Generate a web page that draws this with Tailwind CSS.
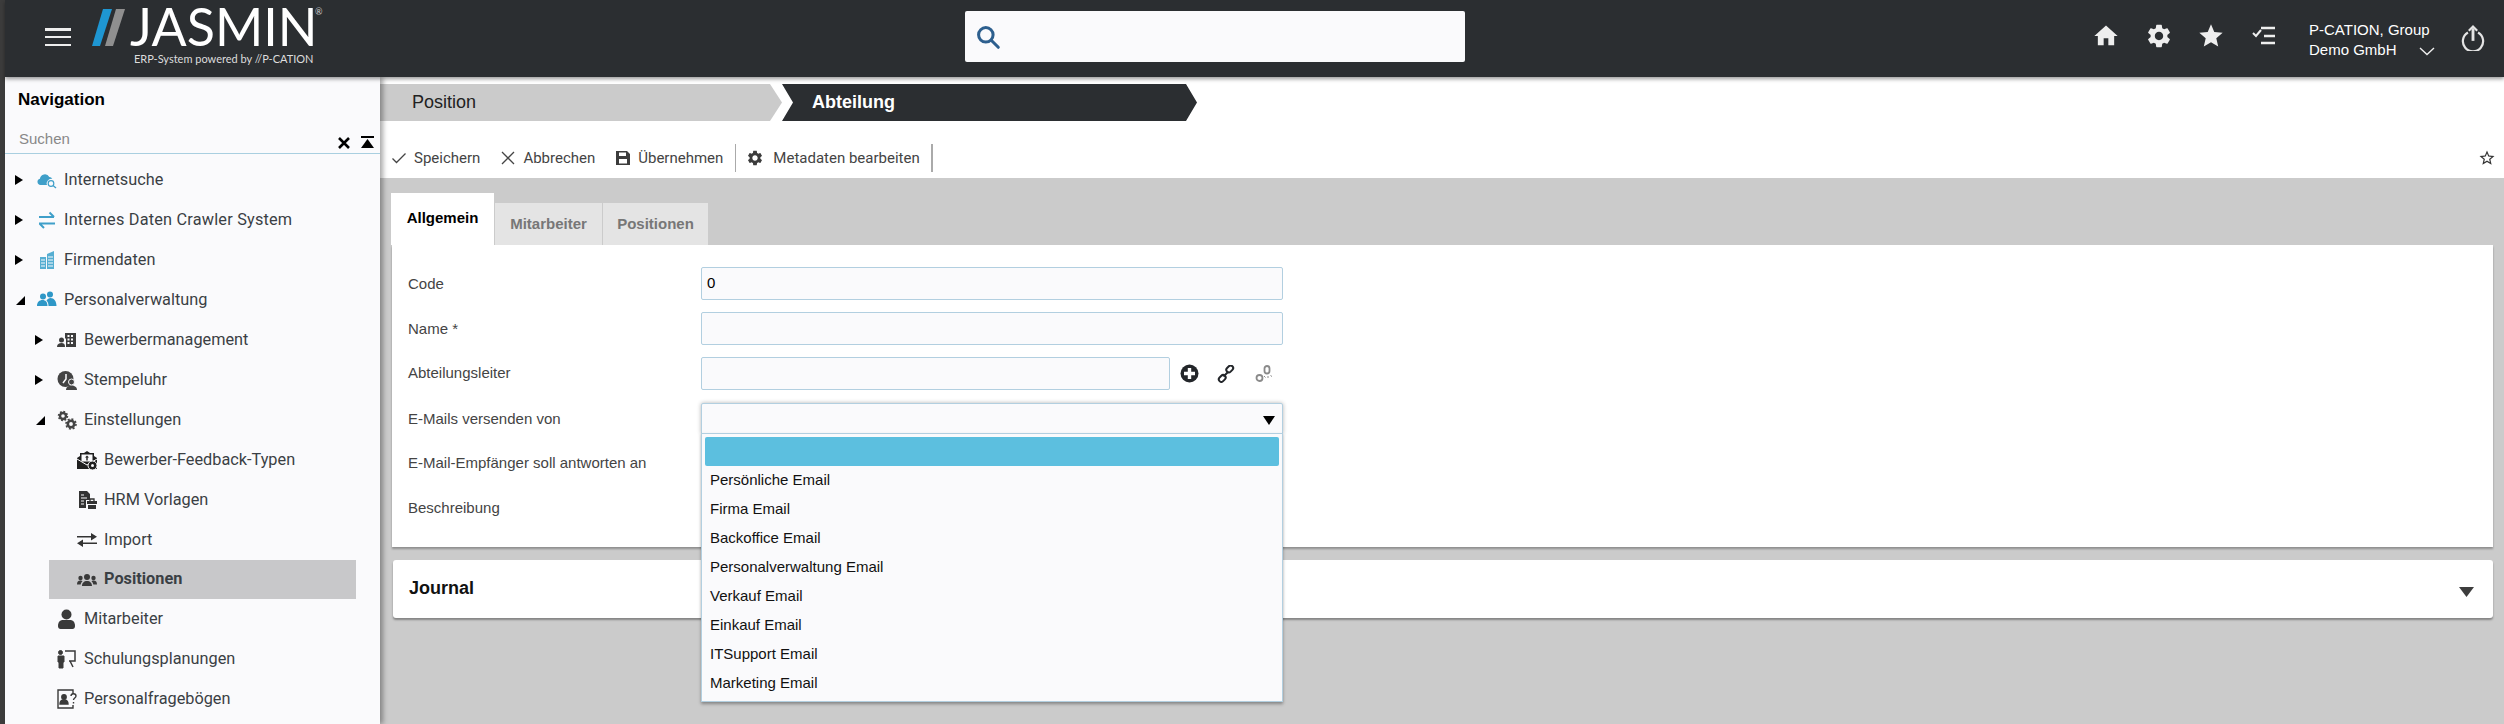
<!DOCTYPE html>
<html lang="de">
<head>
<meta charset="utf-8">
<script src="https://cdn.jsdelivr.net/npm/@tailwindcss/browser@4"></script>
<title>JASMIN</title>
</head>
<body class="m-0 h-[724px] w-[2504px] overflow-hidden bg-[#3c3c3c] font-['Liberation_Sans',sans-serif]">
<div class="flex h-[724px] w-[2504px]">
  <div class="w-[5px] shrink-0 bg-[#3c3c3c]"></div>
  <div class="flex h-[724px] w-[2499px] flex-col">
    <!-- Header -->
    <header class="relative z-20 flex h-[77px] shrink-0 items-start bg-[#2b2e31] shadow-[0_2px_4px_rgba(0,0,0,0.4)]">
      <button class="ml-[40px] mt-[27px] flex h-[20px] w-[26px] flex-col justify-between py-[1px]">
        <span class="block h-[2.5px] w-[26px] bg-[#eeeeee]"></span>
        <span class="block h-[2.5px] w-[26px] bg-[#eeeeee]"></span>
        <span class="block h-[2.5px] w-[26px] bg-[#eeeeee]"></span>
      </button>
      <svg class="ml-[21px] mt-[9px] shrink-0" width="33" height="37" viewBox="0 0 33 37"><polygon points="0,37 8,37 20,0 11,0" fill="#1e96d2"/><polygon points="13,37 21,37 33,0 24,0" fill="#8f8f8f"/></svg>
      <div class="ml-[5px] flex w-[200px] flex-col">
        <div class="relative h-[52px] font-['Lato',sans-serif] text-[52px] font-normal leading-[52px] tracking-[0px] text-white">JASMIN<span class="absolute left-[185px] top-[7px] text-[9px] leading-[10px] tracking-normal text-[#cccccc]">®</span></div>
        <div class="ml-[4px] whitespace-nowrap font-['Lato',sans-serif] text-[11px] leading-[14px] text-[#dddddd]">ERP-System powered by //P-CATION</div>
      </div>
      <div class="ml-[635px] mt-[11px] flex h-[51px] w-[500px] shrink-0 items-center rounded-[2px] bg-[#fafafc] pl-[10px]">
        <svg width="26" height="26" viewBox="0 0 24 24" fill="none" stroke="#2d5f8e" stroke-width="2.8"><circle cx="10" cy="10" r="6.7"/><path d="M15 15l6.5 6.5" stroke-linecap="round"/></svg>
      </div>
      <svg class="ml-[627px] mt-[22px] shrink-0" width="28" height="28" viewBox="0 0 24 24" fill="#eeeeee"><path d="M10 20v-6h4v6h5v-8h3L12 3 2 12h3v8z"/></svg>
      <svg class="ml-[25px] mt-[22px] shrink-0" width="28" height="28" viewBox="0 0 24 24" fill="#eeeeee"><path d="M19.14 12.94c.04-.3.06-.61.06-.94 0-.32-.02-.64-.07-.94l2.03-1.58c.18-.14.23-.41.12-.61l-1.92-3.32c-.12-.22-.37-.29-.59-.22l-2.39.96c-.5-.38-1.03-.7-1.62-.94l-.36-2.54c-.04-.24-.24-.41-.48-.41h-3.84c-.24 0-.43.17-.47.41l-.36 2.54c-.59.24-1.13.57-1.62.94l-2.39-.96c-.22-.08-.47 0-.59.22L2.74 8.87c-.12.21-.08.47.12.61l2.03 1.58c-.05.3-.09.63-.09.94s.02.64.07.94l-2.03 1.58c-.18.14-.23.41-.12.61l1.92 3.32c.12.22.37.29.59.22l2.39-.96c.5.38 1.03.7 1.62.94l.36 2.54c.05.24.24.41.48.41h3.84c.24 0 .44-.17.47-.41l.36-2.54c.59-.24 1.13-.56 1.62-.94l2.39.96c.22.08.47 0 .59-.22l1.92-3.32c.12-.22.07-.47-.12-.61l-2.01-1.58zM12 15.6c-1.98 0-3.6-1.62-3.6-3.6s1.62-3.6 3.6-3.6 3.6 1.62 3.6 3.6-1.62 3.6-3.6 3.6z"/></svg>
      <svg class="ml-[24px] mt-[22px] shrink-0" width="28" height="28" viewBox="0 0 24 24" fill="#eeeeee"><path d="M12 17.27 18.18 21l-1.64-7.03L22 9.24l-7.19-.61L12 2 9.19 8.63 2 9.24l5.46 4.73L5.82 21z"/></svg>
      <svg class="ml-[25px] mt-[23px] shrink-0" width="28" height="28" viewBox="0 0 28 28" fill="none" stroke="#eeeeee" stroke-width="2.4"><path d="M3 10l3 3 5-6" stroke-width="2"/><path d="M11 5h14M14 13h11M11 20h14"/></svg>
      <div class="ml-[31px] mt-[20px] w-[126px] text-[15px] leading-[20px] text-white">
        <div class="whitespace-nowrap">P-CATION, Group</div>
        <div class="flex items-center whitespace-nowrap">Demo GmbH<svg class="ml-[22px] mt-[3px]" width="16" height="9" viewBox="0 0 16 9" fill="none" stroke="#eeeeee" stroke-width="1.4"><path d="M1 1l7 6.5L15 1"/></svg></div>
      </div>
      <svg class="ml-[26px] mt-[24px] shrink-0" width="24" height="27" viewBox="0 0 28 32" fill="none" stroke="#e4e4e4" stroke-width="2.6"><path d="M8 10a12 12 0 1 0 12 0"/><path d="M14 20V5" stroke-width="3.4"/><path d="M9 8l5-5 5 5" stroke-width="2.6"/></svg>
    </header>

    <div class="flex h-[647px] w-[2499px]">
      <!-- Sidebar -->
      <aside class="relative z-10 h-[647px] w-[375px] shrink-0 overflow-hidden bg-[#fafafc] text-[16.3px] text-[#3a3f44] shadow-[3px_0_5px_rgba(0,0,0,0.35)] font-['Roboto',sans-serif]">
        <div class="pl-[13px] pt-[13px] text-[17px] font-bold leading-[20px] text-black font-['Liberation_Sans',sans-serif]">Navigation</div>
        <div class="mt-[15px] flex h-[29px] items-center border-b border-[#a9cfe0] pl-[14px] pr-[6px]">
          <span class="flex-1 text-[15px] text-[#888888] font-['Liberation_Sans',sans-serif]">Suchen</span>
          <svg class="mr-[10px] mt-[8px]" width="14" height="14" viewBox="0 0 14 14" stroke="#000" stroke-width="2.6"><path d="M2 2l10 10M12 2L2 12"/></svg>
          <svg class="mt-[6px]" width="13" height="13" viewBox="0 0 13 13" fill="#000"><rect x="0" y="0" width="13" height="2"/><polygon points="6.5,3 13,12 0,12"/></svg>
        </div>
        <nav class="mt-[6px]">
          <div class="flex h-10 items-center pl-[10px]">
            <span class="w-[22px]"><svg width="8" height="10" viewBox="0 0 8 10"><polygon points="0,0 8,5 0,10" fill="#000"/></svg></span>
            <svg class="mr-[7px]" width="20" height="20" viewBox="0 0 20 20" fill="#3f9fc9"><path d="M3.5 15a3.2 3.2 0 0 1-.6-6.3A5 5 0 0 1 12.3 7a3.5 3.5 0 0 1 3 2A4.5 4.5 0 0 0 10 15z"/><circle cx="14" cy="13.5" r="2.8" fill="none" stroke="#3f9fc9" stroke-width="1.2"/><path d="M16 15.5l3 2.5" stroke="#3f9fc9" stroke-width="1.3"/></svg>
            <span>Internetsuche</span>
          </div>
          <div class="flex h-10 items-center pl-[10px]">
            <span class="w-[22px]"><svg width="8" height="10" viewBox="0 0 8 10"><polygon points="0,0 8,5 0,10" fill="#000"/></svg></span>
            <svg class="mr-[7px]" width="20" height="20" viewBox="0 0 20 20" fill="none" stroke="#3f9fc9" stroke-width="2"><path d="M2 7h15M12.5 2.5L17 7M2 13.5h16M2.5 13.5L7 18"/></svg>
            <span class="tracking-[0.2px]">Internes Daten Crawler System</span>
          </div>
          <div class="flex h-10 items-center pl-[10px]">
            <span class="w-[22px]"><svg width="8" height="10" viewBox="0 0 8 10"><polygon points="0,0 8,5 0,10" fill="#000"/></svg></span>
            <svg class="mr-[7px]" width="20" height="20" viewBox="0 0 20 20" fill="#56aed2"><rect x="3" y="7" width="6" height="12"/><polygon points="10,4 17,1 17,19 10,19"/><path d="M4 10h4M4 13h4M4 16h4M11 7h5M11 10h5M11 13h5M11 16h5" stroke="#fafafc" stroke-width="1"/></svg>
            <span>Firmendaten</span>
          </div>
          <div class="flex h-10 items-center pl-[10px]">
            <span class="w-[22px]"><svg class="ml-[1px]" width="9" height="9" viewBox="0 0 9 9"><polygon points="9,0 9,9 0,9" fill="#000"/></svg></span>
            <svg class="mr-[7px]" width="20" height="20" viewBox="0 0 20 20" fill="#2e97c7"><circle cx="6" cy="6.5" r="3"/><circle cx="13" cy="4.5" r="3"/><path d="M0 16c0-4 2.500-6 5.500-6s5 2 5 6zM11.500 16c0-2-.5-4-2-5.500 1-1.500 2.500-2.500 4-2.500 3.500 0 6 3 6 8z"/></svg>
            <span>Personalverwaltung</span>
          </div>
          <div class="flex h-10 items-center pl-[30px]">
            <span class="w-[22px]"><svg width="8" height="10" viewBox="0 0 8 10"><polygon points="0,0 8,5 0,10" fill="#000"/></svg></span>
            <svg class="mr-[7px]" width="20" height="20" viewBox="0 0 20 20" fill="#3d3d3d"><circle cx="4.500" cy="10" r="2.500"/><path d="M0 17c0-3 2-4 4.500-4s3.500 1 3.500 4z"/><path d="M8 3h11v14H9V8.500H8zM10.500 5v2h2V5zm3.500 0v2h2V5zm-3.500 3.500v2h2v-2zm3.500 0v2h2v-2zM10.500 12v2h2v-2zm3.500 0v2h2v-2z" fill-rule="evenodd"/></svg>
            <span>Bewerbermanagement</span>
          </div>
          <div class="flex h-10 items-center pl-[30px]">
            <span class="w-[22px]"><svg width="8" height="10" viewBox="0 0 8 10"><polygon points="0,0 8,5 0,10" fill="#000"/></svg></span>
            <svg class="mr-[7px]" width="20" height="20" viewBox="0 0 20 20" fill="#444"><circle cx="8.500" cy="9" r="8"/><path d="M9 4v5l-3 4" stroke="#fafafc" stroke-width="1.500" fill="none"/><circle cx="14.500" cy="12" r="3" stroke="#fafafc" stroke-width="1"/><path d="M9 20c0-3 2.500-4.500 5.500-4.500S20 17 20 20z"/></svg>
            <span>Stempeluhr</span>
          </div>
          <div class="flex h-10 items-center pl-[30px]">
            <span class="w-[22px]"><svg class="ml-[1px]" width="9" height="9" viewBox="0 0 9 9"><polygon points="9,0 9,9 0,9" fill="#000"/></svg></span>
            <svg class="mr-[7px]" width="20" height="20" viewBox="0 0 20 20" fill="none" stroke="#444"><circle cx="6" cy="6" r="3" stroke-width="2.400"/><circle cx="6" cy="6" r="4.500" stroke-width="1.500" stroke-dasharray="1.800 1.700"/><circle cx="14" cy="14" r="3.200" stroke-width="2.600"/><circle cx="14" cy="14" r="5" stroke-width="1.600" stroke-dasharray="2 1.900"/></svg>
            <span>Einstellungen</span>
          </div>
          <div class="flex h-10 items-center pl-[50px]">
            <span class="w-[22px]"></span>
            <svg class="mr-[7px]" width="20" height="20" viewBox="0 0 20 20" fill="#1f1f1f"><path d="M0 8l3-2V3h4l3-2 3 2h4v3l3 2v11H0z"/><rect x="4.500" y="4.500" width="11" height="7" fill="#fafafc"/><path d="M10 5.500l2 2h-1.300v3h-1.400v-3H8z"/><path d="M0 9l10 6 10-6" stroke="#fafafc" fill="none"/><circle cx="15.500" cy="15.500" r="4.500" stroke="#fafafc"/><circle cx="15.500" cy="15.500" r="1.500" fill="#fafafc"/></svg>
            <span>Bewerber-Feedback-Typen</span>
          </div>
          <div class="flex h-10 items-center pl-[50px]">
            <span class="w-[22px]"></span>
            <svg class="mr-[7px]" width="20" height="20" viewBox="0 0 20 20" fill="#333"><path d="M2 1h8l3 3v6H9v8H2z"/><path d="M4 5h3M4 8h6M4 11h3M4 14h3" stroke="#fafafc" stroke-width="1.200"/><path d="M10 11h10v3H10zM11 15h8v4h-8z"/><path d="M13 11V9h4v2" fill="none" stroke="#333" stroke-width="1.300"/></svg>
            <span>HRM Vorlagen</span>
          </div>
          <div class="flex h-10 items-center pl-[50px]">
            <span class="w-[22px]"></span>
            <svg class="mr-[7px]" width="20" height="20" viewBox="0 0 20 20" fill="#333"><path d="M0 6h14v1.600H0zM14 3l6 3.800-6 3.800zM20 12.500H6v1.600h14zM6 9.500l-6 3.800 6 3.800z"/></svg>
            <span>Import</span>
          </div>
          <div class="ml-[44px] mr-[24px] flex h-[39px] items-center bg-[#c8c8ca] pl-[6px] font-bold">
            <span class="w-[22px]"></span>
            <svg class="mr-[7px]" width="20" height="20" viewBox="0 0 20 20" fill="#3a3a3a"><circle cx="10" cy="7" r="3"/><circle cx="3.500" cy="8" r="2.200"/><circle cx="16.500" cy="8" r="2.200"/><path d="M5 16c0-3 2-5 5-5s5 2 5 5zM0 14.500c0-2.500 1-4 3.500-4 1 0 1.500.3 2 .7-1 1-1.700 2-1.800 3.300zM20 14.500c0-2.500-1-4-3.500-4-1 0-1.500.3-2 .7 1 1 1.700 2 1.800 3.300z"/></svg>
            <span>Positionen</span>
          </div>
          <div class="flex h-10 items-center pl-[30px]">
            <span class="w-[22px]"></span>
            <svg class="mr-[7px]" width="20" height="20" viewBox="0 0 20 20" fill="#3a3a3a"><circle cx="9.500" cy="5.500" r="5"/><path d="M1 17c0-4 2-6 5-6h7c3 0 5 2 5 6 0 2-1 3-2.500 3h-12C2 20 1 19 1 17z"/></svg>
            <span>Mitarbeiter</span>
          </div>
          <div class="flex h-10 items-center pl-[30px]">
            <span class="w-[22px]"></span>
            <svg class="mr-[7px]" width="20" height="20" viewBox="0 0 20 20" fill="none" stroke="#3a3a3a"><circle cx="3.500" cy="3.500" r="2" fill="#3a3a3a"/><path d="M1 7h6v6H6v6H2v-6H1z" fill="#3a3a3a"/><path d="M8 2h10v10h-6M13 12l3 6" stroke-width="1.500"/></svg>
            <span>Schulungsplanungen</span>
          </div>
          <div class="flex h-10 items-center pl-[30px]">
            <span class="w-[22px]"></span>
            <svg class="mr-[7px]" width="20" height="20" viewBox="0 0 20 20" fill="none" stroke="#3a3a3a" stroke-width="1.400"><path d="M16 5V1H1v18h15v-3"/><circle cx="7" cy="8" r="2.200" fill="#3a3a3a"/><path d="M3 15c0-3 2-4 4-4s4 1 4 4z" fill="#3a3a3a"/><path d="M14 7c0-3 5-3 5 0 0 2-2.500 2-2.500 4M16.500 13v1.500"/></svg>
            <span>Personalfragebögen</span>
          </div>
        </nav>
      </aside>

      <!-- Main -->
      <main class="flex h-[647px] flex-1 flex-col bg-[#cbcbcb]">
        <div class="h-[101px] shrink-0 bg-white pt-[7px]">
          <div class="flex h-[37px]">
            <div class="flex w-[402px] items-center bg-[#cbcbcb] pl-[32px] text-[18px] text-[#222222] [clip-path:polygon(0_0,390px_0,100%_50%,390px_100%,0_100%)]">Position</div>
            <div class="flex w-[415px] items-center bg-[#2b2e31] pl-[30px] text-[18px] font-bold text-white [clip-path:polygon(0_0,calc(100%-11px)_0,100%_50%,calc(100%-11px)_100%,0_100%,11px_50%)]">Abteilung</div>
          </div>
          <div class="mt-[23px] flex h-[28px] items-center font-['Roboto',sans-serif] text-[15px] text-[#444444]">
            <svg class="ml-[11px] shrink-0" width="16" height="16" viewBox="0 0 16 16" fill="none" stroke="#444" stroke-width="1.300"><path d="M1.500 8.500l4 4 9-9"/></svg>
            <span class="ml-[7px]">Speichern</span>
            <svg class="ml-[20px] shrink-0" width="16" height="16" viewBox="0 0 16 16" fill="none" stroke="#444" stroke-width="1.300"><path d="M2 2l12 12M14 2L2 14"/></svg>
            <span class="ml-[7px]">Abbrechen</span>
            <svg class="ml-[20px] shrink-0" width="16" height="16" viewBox="0 0 16 16" fill="#3c3c3c"><path d="M1 1h11l3 3v11H1zM4 2.500v3.500h7V2.500zM4 9v4.500h8V9z" fill-rule="evenodd"/></svg>
            <span class="ml-[7px]">Übernehmen</span>
            <span class="ml-[12px] h-[28px] w-[1px] bg-[#aaaaaa]"></span>
            <svg class="ml-[10px] shrink-0" width="18" height="18" viewBox="0 0 24 24" fill="#3c3c3c"><path d="M19.140 12.940c.04-.3.06-.61.06-.94 0-.32-.02-.64-.07-.94l2.030-1.580c.18-.14.23-.41.12-.61l-1.920-3.320c-.12-.22-.37-.29-.59-.22l-2.390.96c-.5-.38-1.030-.7-1.620-.94l-.36-2.540c-.04-.24-.24-.41-.48-.41h-3.840c-.24 0-.43.17-.47.41l-.36 2.540c-.59.24-1.130.57-1.620.94l-2.390-.96c-.22-.08-.47 0-.59.22L2.740 8.870c-.12.21-.08.47.12.61l2.030 1.580c-.05.3-.09.63-.09.94s.02.64.07.94l-2.030 1.580c-.18.14-.23.41-.12.61l1.920 3.320c.12.22.37.29.59.22l2.390-.96c.5.38 1.030.7 1.620.94l.36 2.540c.05.24.24.41.48.41h3.840c.24 0 .44-.17.47-.41l.36-2.540c.59-.24 1.130-.56 1.620-.94l2.390.96c.22.08.47 0 .59-.22l1.920-3.320c.12-.22.07-.47-.12-.61l-2.010-1.580zM12 15.600c-1.980 0-3.600-1.620-3.600-3.600s1.620-3.600 3.600-3.600 3.600 1.620 3.600 3.600-1.620 3.600-3.600 3.600z"/></svg>
            <span class="ml-[9px]">Metadaten bearbeiten</span>
            <span class="ml-[11px] h-[28px] w-[2px] bg-[#aaaaaa]"></span>
            <svg class="ml-auto mr-[8px] shrink-0" width="18" height="18" viewBox="0 0 24 24" fill="#333"><path d="M22 9.240l-7.190-.62L12 2 9.190 8.630 2 9.240l5.460 4.730L5.820 21 12 17.270 18.180 21l-1.630-7.030L22 9.240zM12 15.400l-3.760 2.270 1-4.280-3.320-2.880 4.380-.38L12 6.100l1.710 4.040 4.380.38-3.320 2.880 1 4.280L12 15.400z"/></svg>
          </div>
        </div>

        <div class="ml-[11px] mr-[11px] mt-[15px] flex h-[52px] items-end text-[15px] font-bold">
          <div class="flex h-[52px] w-[103px] items-center justify-center bg-white pb-[1px] text-black">Allgemein</div>
          <div class="ml-[1px] flex h-[42px] w-[107px] items-center justify-center bg-[#e4e4e4] text-[#777777]">Mitarbeiter</div>
          <div class="ml-[1px] flex h-[42px] w-[105px] items-center justify-center bg-[#e4e4e4] text-[#777777]">Positionen</div>
        </div>

        <section class="relative z-10 ml-[12px] mr-[11px] h-[302px] bg-white pl-[16px] pt-[22px] text-[15px] text-[#444444] shadow-[0_2px_2px_rgba(0,0,0,0.3)]">
          <div class="mb-[12px] flex h-[33px] items-center">
            <label class="mt-[1px] w-[293px]">Code</label>
            <div class="flex h-[33px] w-[582px] items-center rounded-[2px] border border-[#b2cfe0] bg-[#fafafc] pl-[5px] text-black">0</div>
          </div>
          <div class="mb-[12px] flex h-[33px] items-center">
            <label class="mt-[1px] w-[293px]">Name *</label>
            <div class="h-[33px] w-[582px] rounded-[2px] border border-[#b2cfe0] bg-[#fafafc]"></div>
          </div>
          <div class="mb-[12px] flex h-[33px] items-center">
            <label class="w-[293px]">Abteilungsleiter</label>
            <div class="h-[33px] w-[469px] rounded-[2px] border border-[#b2cfe0] bg-[#fafafc]"></div>
            <svg class="ml-[10px]" width="19" height="19" viewBox="0 0 19 19"><circle cx="9.500" cy="9.500" r="9" fill="#23262a"/><path d="M9.500 4v11M4 9.500h11" stroke="#fff" stroke-width="3.400"/></svg>
            <svg class="ml-[18px]" width="18" height="18" viewBox="0 0 18 18" fill="none" stroke="#23262a" stroke-width="2"><rect x="9" y="1.500" width="7.500" height="5" rx="2.500" transform="rotate(-45 12.700 4)"/><rect x="1.500" y="11" width="7.500" height="5" rx="2.500" transform="rotate(-45 5.200 13.500)"/><path d="M6.500 11.500l5-5"/></svg>
            <svg class="ml-[20px]" width="18" height="18" viewBox="0 0 18 18" fill="none" stroke="#8a8a8a" stroke-width="1.800"><rect x="9.500" y="1" width="5" height="7.500" rx="2.500"/><circle cx="4.500" cy="13" r="3"/><path d="M9 11l1.500 1.500M13 11v2M15.500 10.500l1.500 1" stroke-width="1"/></svg>
          </div>
          <div class="relative mb-[12px] flex h-[33px] items-center">
            <label class="mt-[1px] w-[293px]">E-Mails versenden von</label>
            <div class="relative h-[31px] w-[582px] rounded-t-[2px] border border-[#b2cfe0] bg-[#fafafc] shadow-[0_0_4px_rgba(0,0,0,0.3)]">
              <svg class="absolute right-[7px] top-[12px]" width="12" height="9" viewBox="0 0 12 9"><polygon points="0,0 12,0 6,9" fill="#000"/></svg>
              <div class="absolute -left-[1px] top-[29px] z-30 w-[582px] border border-[#b2cfe0] bg-[#fafafc] px-[3px] pb-[3px] pt-[3px] text-[15px] text-[#111111] shadow-[0_2px_3px_rgba(0,0,0,0.35)]">
                <div class="h-[29px] rounded-[2px] bg-[#5cbfdf]"></div>
                <div class="flex h-[29px] items-center pl-[5px]">Persönliche Email</div>
                <div class="flex h-[29px] items-center pl-[5px]">Firma Email</div>
                <div class="flex h-[29px] items-center pl-[5px]">Backoffice Email</div>
                <div class="flex h-[29px] items-center pl-[5px]">Personalverwaltung Email</div>
                <div class="flex h-[29px] items-center pl-[5px]">Verkauf Email</div>
                <div class="flex h-[29px] items-center pl-[5px]">Einkauf Email</div>
                <div class="flex h-[29px] items-center pl-[5px]">ITSupport Email</div>
                <div class="flex h-[29px] items-center pl-[5px]">Marketing Email</div>
              </div>
            </div>
          </div>
          <div class="mb-[12px] flex h-[33px] items-center"><label class="w-[293px]">E-Mail-Empfänger soll antworten an</label></div>
          <div class="flex h-[33px] items-center"><label class="w-[293px]">Beschreibung</label></div>
        </section>

        <section class="ml-[13px] mr-[11px] mt-[13px] flex h-[58px] items-center justify-between rounded-[3px] bg-white pb-[2px] pl-[16px] pr-[19px] shadow-[0_2px_2px_rgba(0,0,0,0.35)]">
          <span class="text-[18px] font-bold text-[#111111]">Journal</span>
          <svg class="mt-[8px]" width="15" height="10" viewBox="0 0 15 10"><polygon points="0,0 15,0 7.500,10" fill="#3d3d3d"/></svg>
        </section>
      </main>
    </div>
  </div>
</div>
</body>
</html>
